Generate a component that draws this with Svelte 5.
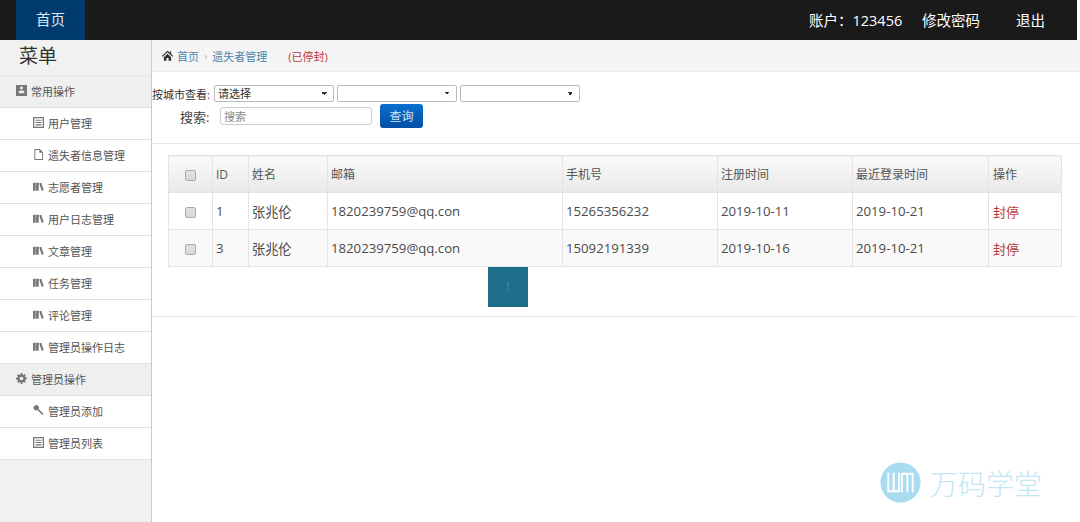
<script>
  const homePath = "M8 2 1 8.5l1 1L8 4l6 5.5 1-1-2.5-2.3V3h-2v1.4zM3.500 10v4.500h3.200V11h2.600v3.500h3.200V10L8 5.800z";

  const icons = {
    panel: { vb: "1 1 12 12", d: "M1 1h12v12H1zM5.400 4.200a1.600 1.600 0 1 0 3.200 0a1.600 1.600 0 0 0-3.200 0zM4 10h6V8.500C10 7.500 9 7 7 7s-3 .5-3 1.500z" },
    list: { vb: "1.500 1.500 11 11", d: "M2 1.500h10a.5.5 0 0 1 .5.5v10a.5.5 0 0 1-.5.5H2a.5.5 0 0 1-.5-.5V2a.5.5 0 0 1 .5-.5zm.8 1.300v8.400h8.400V2.800zM4 4.200h6v1.100H4zM4 6.500h6v1.100H4zM4 8.800h6v1.100H4z" },
    file: { vb: "1 1 12 12", d: "M2.500 1h6l3.500 3.500V13h-9.500zm1 1v10h7.500V5.200H8V2z" },
    books: { vb: "1 1 12.500 12.500", d: "M1 3h3v9H1zM4.500 3h3v9h-3zM8 3.600l2.400-.7 2.800 8.600-2.400.7z" },
    gear: { vb: "0 0 14 14", d: "M6 0h2l.3 1.900 1.200.5L11 1.300l1.500 1.500-1.100 1.500.5 1.200 1.900.3v2.200l-1.900.3-.5 1.200 1.100 1.500-1.500 1.500-1.500-1.100-1.200.5L8 14H6l-.3-1.900-1.200-.5L3 12.700l-1.500-1.500 1.100-1.500-.5-1.200L0 8.200V6l1.900-.3.500-1.200-1.100-1.500L2.800 1.500l1.500 1.100 1.200-.5zm1 4.700a2.300 2.300 0 1 0 0 4.600a2.300 2.300 0 0 0 0-4.600z" },
    wrench: { vb: "1 0.500 13 13", d: "M1.500 4.500 4 7l2.300-.6L12 12.200l1.300-1.300-5.700-5.800L8.200 3 5.800.6C3.500.4 1.300 2.200 1.500 4.500z" }
  };

  const groups = [
    {
      title: "常用操作",
      icon: "panel",
      items: [
        ["用户管理", "list"],
        ["遗失者信息管理", "file"],
        ["志愿者管理", "books"],
        ["用户日志管理", "books"],
        ["文章管理", "books"],
        ["任务管理", "books"],
        ["评论管理", "books"],
        ["管理员操作日志", "books"]
      ]
    },
    {
      title: "管理员操作",
      icon: "gear",
      items: [
        ["管理员添加", "wrench"],
        ["管理员列表", "list"]
      ]
    }
  ];

  const columns = ["ID", "姓名", "邮箱", "手机号", "注册时间", "最近登录时间", "操作"];

  const rows = [
    { id: 1, name: "张兆伦", mail: "1820239759@qq.con", phone: "15265356232", reg: "2019-10-11", last: "2019-10-21" },
    { id: 3, name: "张兆伦", mail: "1820239759@qq.con", phone: "15092191339", reg: "2019-10-16", last: "2019-10-21" }
  ];
</script>

<div class="page">
  <header class="topbar">
    <a class="tab">首页</a>
    <div class="account">
      <span class="acc-no">账户：123456</span>
      <span class="acc-pwd">修改密码</span>
      <span class="acc-exit">退出</span>
    </div>
  </header>

  <div class="body">
    <aside class="sidebar">
      <div class="menu-title">菜单</div>
      {#each groups as group}
        <div class="group">
          <svg class="ico" viewBox={icons[group.icon].vb}><path d={icons[group.icon].d} fill-rule="evenodd" /></svg>
          {group.title}
        </div>
        {#each group.items as item}
          <div class="item">
            <svg class="ico" viewBox={icons[item[1]].vb}><path d={icons[item[1]].d} fill-rule="evenodd" /></svg>
            {item[0]}
          </div>
        {/each}
      {/each}
    </aside>

    <main class="main">
      <div class="crumbs">
        <svg class="home" viewBox="0 0 16 16"><path d={homePath} fill-rule="evenodd" /></svg>
        <span class="link">首页</span>
        <span class="sep">›</span>
        <span class="link">遗失者管理</span>
        <span class="banned">(已停封)</span>
      </div>

      <div class="filters">
        <div class="line-city">
          <span class="city-label">按城市查看:</span>
          <select><option>请选择</option></select>
          <select><option></option></select>
          <select><option></option></select>
        </div>
        <div class="line-search">
          <span class="search-label">搜索:</span>
          <input type="text" placeholder="搜索" />
          <button>查询</button>
        </div>
      </div>

      <div class="table-wrap">
        <table>
          <colgroup>
            <col style="width: 44px" />
            <col style="width: 36px" />
            <col style="width: 79px" />
            <col style="width: 235px" />
            <col style="width: 155px" />
            <col style="width: 135px" />
            <col style="width: 136px" />
            <col style="width: 73px" />
          </colgroup>
          <thead>
            <tr>
              <th class="check"><input type="checkbox" /></th>
              {#each columns as col}
                <th>{col}</th>
              {/each}
            </tr>
          </thead>
          <tbody>
            {#each rows as row}
              <tr>
                <td class="check"><input type="checkbox" /></td>
                <td>{row.id}</td>
                <td>{row.name}</td>
                <td>{row.mail}</td>
                <td>{row.phone}</td>
                <td>{row.reg}</td>
                <td>{row.last}</td>
                <td class="action">封停</td>
              </tr>
            {/each}
          </tbody>
        </table>
        <div class="pager"><span class="page-no">1</span></div>
      </div>
    </main>
  </div>

  <div class="watermark">
    <svg viewBox="0 0 42 42" width="41" height="41">
      <circle cx="21" cy="21" r="20.500" fill="#a9dcf0" />
      <path d="M8.500 11v19h11V11M14 11v19M22.500 31V12h11v19M28 31V12" fill="none" stroke="#fff" stroke-width="2" />
    </svg>
    <span>万码学堂</span>
  </div>
</div>

<style>
  :global(body) {
    margin: 0;
    background: #fff;
  }
  .page {
    position: relative;
    width: 1080px;
    height: 522px;
    overflow: hidden;
    font-family: "Open Sans", "Noto Sans CJK SC", sans-serif;
    color: #555;
    font-size: 13px;
  }

  .topbar {
    height: 40px;
    margin-right: 3px;
    background: #1a1a1a;
    display: flex;
    justify-content: space-between;
    color: #fff;
  }
  .tab {
    margin-left: 16px;
    width: 69px;
    background: #003b70;
    text-align: center;
    line-height: 39px;
    font-size: 14.500px;
    color: #dfe8f0;
  }
  .account {
    display: flex;
    align-items: center;
    font-size: 14.500px;
    padding: 0 32px 2px 0;
  }
  .acc-no {
    width: 113px;
    white-space: nowrap;
  }
  .acc-pwd {
    width: 94px;
  }

  .body {
    display: flex;
    height: 482px;
  }
  .sidebar {
    box-sizing: border-box;
    width: 152px;
    flex: none;
    background: #f1f1f1;
    border-right: 1px solid #c9c9c9;
  }
  .menu-title {
    height: 36px;
    box-sizing: border-box;
    padding-left: 19px;
    font-size: 19px;
    line-height: 32px;
    color: #333;
    border-bottom: 1px solid #e6e6e6;
  }
  .group,
  .item {
    display: flex;
    align-items: center;
    box-sizing: border-box;
    height: 32px;
    padding-bottom: 2px;
    font-size: 11px;
    color: #555;
    border-bottom: 1px solid #dfdfdf;
  }
  .group {
    padding-left: 16px;
    background: #efefef;
    gap: 4px;
  }
  .item {
    padding-left: 33px;
    background: #fff;
    gap: 4px;
  }
  .ico {
    width: 11px;
    height: 11px;
    fill: #777;
    flex: none;
  }

  .main {
    flex: 1;
    min-width: 0;
  }
  .crumbs {
    display: flex;
    align-items: center;
    height: 32px;
    padding-left: 9px;
    background: #f5f5f5;
    border-bottom: 1px solid #ececec;
    box-sizing: border-box;
    font-size: 11px;
  }
  .home {
    width: 13px;
    height: 13px;
    fill: #333;
    margin-right: 3px;
  }
  .link {
    color: #4a86ad;
  }
  .sep {
    color: #bbb;
    margin: 0 5px;
  }
  .banned {
    color: #c0393b;
    margin-left: 21px;
  }

  .filters {
    height: 72px;
    box-sizing: border-box;
    padding-top: 13px;
    border-bottom: 1px solid #e6e6e6;
  }
  .line-city {
    display: flex;
    align-items: center;
    height: 17px;
    font-size: 11px;
    color: #333;
  }
  .city-label {
    width: 62px;
    white-space: nowrap;
  }
  select {
    appearance: none;
    box-sizing: border-box;
    width: 120px;
    height: 17px;
    margin-right: 3px;
    padding: 0 0 0 3px;
    font-family: inherit;
    font-size: 11px;
    color: #333;
    background-color: #fff;
    background-image: linear-gradient(45deg, transparent 50%, #333 50%), linear-gradient(-45deg, transparent 50%, #333 50%);
    background-size: 3px 3px, 3px 3px;
    background-position: right 9px top 6px, right 6px top 6px;
    background-repeat: no-repeat;
    border: 1px solid #bbb;
    border-radius: 2px;
  }
  .line-search {
    display: flex;
    align-items: center;
    height: 24px;
    margin-top: 2px;
  }
  .search-label {
    margin-left: 28px;
    width: 40px;
    font-size: 13px;
    color: #444;
  }
  .line-search input {
    box-sizing: border-box;
    width: 152px;
    height: 18px;
    padding: 0 3px;
    font-family: inherit;
    font-size: 11px;
    border: 1px solid #ccc;
    border-radius: 3px;
    outline: none;
  }
  .line-search input::placeholder {
    color: #888;
  }
  button {
    margin-left: 8px;
    width: 43px;
    height: 24px;
    padding: 0;
    font-family: inherit;
    font-size: 12px;
    color: #cfe4f7;
    background: linear-gradient(#0a6fce, #034fa3);
    border: none;
    border-radius: 3px;
  }

  .table-wrap {
    padding: 11px 18px 9px 16px;
    border-bottom: 1px solid #e6e6e6;
    margin-right: 3px;
    box-sizing: border-box;
    height: 173px;
  }
  table {
    table-layout: fixed;
    width: 893px;
    border-collapse: collapse;
    font-size: 13.200px;
    color: #4a4a4a;
  }
  th,
  td {
    box-sizing: border-box;
    padding: 0 0 0 3px;
    border: 1px solid #e4e4e4;
    text-align: left;
    font-weight: normal;
  }
  th {
    height: 37px;
    font-size: 12px;
    color: #555;
    background: linear-gradient(#fafafa, #e9e9e9);
  }
  th:last-child,
  td:last-child {
    padding-left: 4px;
  }
  td {
    height: 37px;
  }
  tbody tr:nth-child(2) td {
    background: #f9f9f9;
  }
  th.check,
  td.check {
    padding: 0;
    text-align: center;
  }
  .check input {
    appearance: none;
    box-sizing: border-box;
    width: 11px;
    height: 11px;
    margin: 0;
    vertical-align: middle;
    background: linear-gradient(#e2e2e2, #d8d8d8);
    border: 1px solid #aaa;
    border-radius: 2px;
  }
  .action {
    color: #b8383a;
    font-size: 13px;
  }

  .pager {
    margin-left: 320px;
    width: 40px;
    height: 40px;
    background: #1f6f8b;
    text-align: center;
    line-height: 40px;
    font-size: 12px;
  }
  .page-no {
    color: #3a8aa8;
  }

  .watermark {
    position: absolute;
    left: 880px;
    top: 462px;
    display: flex;
    align-items: center;
    gap: 9px;
    font-size: 28px;
    font-weight: 300;
    color: #c4e6f3;
    white-space: nowrap;
  }
</style>
